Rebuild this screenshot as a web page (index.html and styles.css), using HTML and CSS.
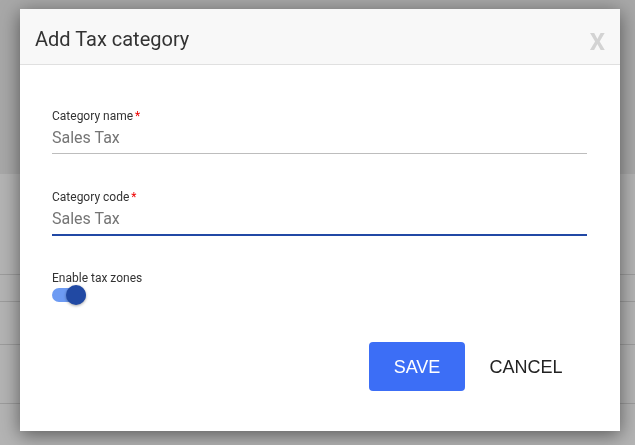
FILE: index.html
```html
<!DOCTYPE html>
<html lang="en">
<head>
  <meta charset="UTF-8" />
  <meta name="viewport" content="width=device-width, initial-scale=1.0" />
  <title>Add Tax category</title>
  <link rel="stylesheet" href="styles.css">
</head>
<body>

  <!-- Page behind the dialog -->
  <div class="page">
    <div class="page-top"></div>
    <div class="page-row row-1"></div>
    <div class="page-row row-2"></div>
    <div class="page-row row-3"></div>
    <div class="page-row row-4"></div>
  </div>

  <!-- Dialog -->
  <div class="overlay">
    <div class="dialog">
      <div class="dialog-header">
        <span class="dialog-title">Add Tax category</span>
        <span class="dialog-close">X</span>
      </div>

      <div class="dialog-body">
        <div class="field">
          <label>Category name<span class="req">*</span></label>
          <div class="input">Sales Tax</div>
        </div>

        <div class="field">
          <label>Category code<span class="req">*</span></label>
          <div class="input focused">Sales Tax</div>
        </div>

        <div class="field toggle-field">
          <label>Enable tax zones</label>
          <div class="toggle">
            <div class="toggle-track"></div>
            <div class="toggle-knob"></div>
          </div>
        </div>

        <div class="actions">
          <button class="btn save">SAVE</button>
          <button class="btn cancel">CANCEL</button>
        </div>
      </div>
    </div>
  </div>

</body>
</html>
```

FILE: styles.css
```css
body {
  margin: 0;
  font-family: Roboto, "Liberation Sans", sans-serif;
  background: #b4b4b4;
  color: #333;
  overflow: hidden;
}

/* Page behind */
.page-top {
  height: 174px;
  background: #a8a8a8;
}

.page-row {
  border-bottom: 1px solid #9c9c9c;
}

.row-1 { height: 100px; }
.row-2 { height: 26px; }
.row-3 { height: 42px; }
.row-4 { height: 58px; }

/* Dialog */
.overlay {
  position: fixed;
  top: 0;
  left: 0;
  right: 0;
  bottom: 0;
  padding: 9px 0 0 20px;
}

.dialog {
  width: 600px;
  background: #fff;
  box-shadow: 0 4px 18px rgba(0, 0, 0, 0.5);
}

.dialog-header {
  box-sizing: border-box;
  height: 56px;
  display: flex;
  justify-content: space-between;
  align-items: flex-start;
  padding: 18px 15px 0 15px;
  background: #f8f8f8;
  border-bottom: 1px solid #e0e0e0;
}

.dialog-title {
  font-size: 20px;
  line-height: 24px;
  color: #333;
}

.dialog-close {
  margin-top: 3px;
  font-size: 24px;
  line-height: 24px;
  font-weight: bold;
  color: #d3d3d3;
}

.dialog-body {
  padding: 44px 33px 40px 32px;
}

.field + .field {
  margin-top: 36px;
}

.field label {
  display: block;
  font-size: 12px;
  line-height: 14px;
  color: #333;
}

.req {
  color: #e00;
  margin-left: 2px;
}

.input {
  padding: 5px 0;
  font-size: 16px;
  line-height: 20px;
  color: #757575;
  border-bottom: 1px solid #bdbdbd;
}

.input.focused {
  border-bottom: 2px solid #2148a5;
}

/* Toggle */
.toggle-field {
  margin-top: 35px !important;
}

.toggle {
  position: relative;
  width: 34px;
  height: 20px;
}

.toggle-track {
  position: absolute;
  top: 3px;
  left: 0;
  width: 34px;
  height: 14px;
  border-radius: 7px;
  background: #6d9bf3;
}

.toggle-knob {
  position: absolute;
  top: 0;
  left: 14px;
  width: 20px;
  height: 20px;
  border-radius: 50%;
  background: #2149a3;
  box-shadow: 0 1px 3px rgba(0, 0, 0, 0.35);
}

/* Buttons */
.actions {
  display: flex;
  justify-content: flex-end;
  margin-top: 37px;
}

.btn {
  height: 49px;
  padding: 0;
  border: none;
  border-radius: 4px;
  font-family: "Liberation Sans", Arial, sans-serif;
  font-size: 18px;
  line-height: 20px;
  background: transparent;
  cursor: pointer;
}

.save {
  width: 96px;
  background: #3c6ef6;
  color: #fff;
}

.cancel {
  width: 122px;
  color: #222;
}
```
